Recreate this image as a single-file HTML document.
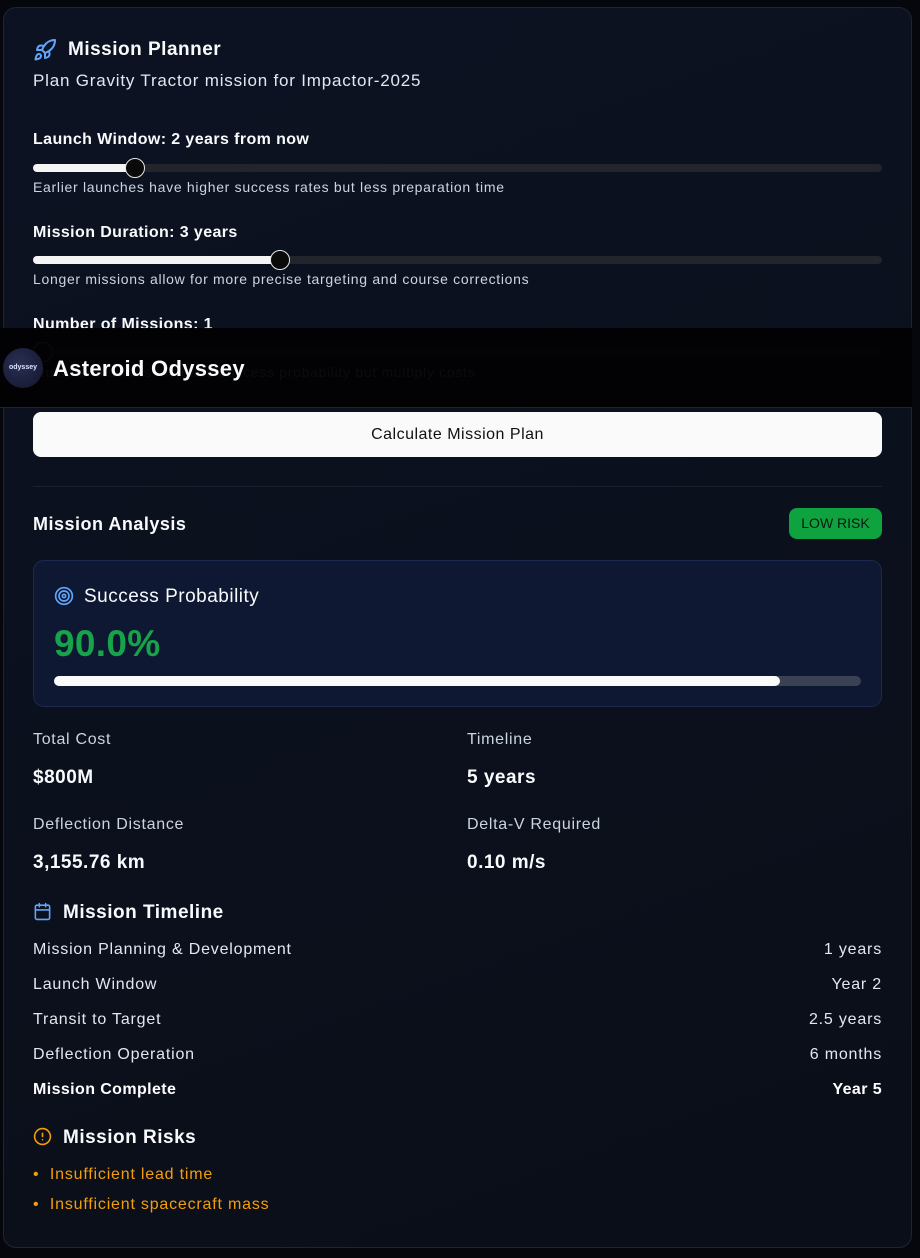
<!DOCTYPE html>
<html><head><style>
*{box-sizing:border-box;margin:0;padding:0}
body{width:920px;height:1258px;background:#05070c;font-family:"Liberation Sans",sans-serif;color:#f8fafc;position:relative;overflow:hidden;letter-spacing:0.5px}
.card{position:absolute;left:3px;top:7px;width:909px;height:1241px;border:1px solid #1e2433;border-radius:13px;background:linear-gradient(160deg,#0c1222,#0b101c 60%,#0a0e18)}
.a{position:absolute;left:33px}
.h{font-weight:bold;font-size:19px}
.lab{font-weight:bold;font-size:16px;letter-spacing:0.4px}
.hint{font-size:14px;color:#cbd5e1;letter-spacing:0.7px}
.track{position:absolute;left:33px;width:849px;height:8px;border-radius:4px;background:#22252b}
.fill{position:absolute;left:0;top:0;height:8px;border-radius:4px;background:#f5f5f5}
.thumb{position:absolute;top:-6px;width:20px;height:20px;border-radius:50%;background:#0a0a0a;border:1.5px solid #e5e5e5}
.k{font-size:16px;color:#cbd5e1;letter-spacing:0.7px}
.v{font-size:19px;font-weight:bold}
.row{position:absolute;left:33px;width:849px;font-size:16px;color:#e2e8f0;display:flex;justify-content:space-between;letter-spacing:0.8px}
</style></head><body>
<div class="card"></div>
<svg class="a" style="top:38px" width="24" height="24" viewBox="0 0 24 24" fill="none" stroke="#60a5fa" stroke-width="2" stroke-linecap="round" stroke-linejoin="round"><path d="M4.5 16.5c-1.5 1.26-2 5-2 5s3.74-.5 5-2c.71-.84.7-2.13-.09-2.91a2.18 2.18 0 0 0-2.91-.09z"/><path d="m12 15-3-3a22 22 0 0 1 2-3.950A12.88 12.88 0 0 1 22 2c0 2.72-.78 7.5-6 11a22.35 22.35 0 0 1-4 2z"/><path d="M9 12H4s.55-3.03 2-4c1.62-1.08 5 0 5 0"/><path d="M12 15v5s3.030-.55 4-2c1.08-1.62 0-5 0-5"/></svg>
<div class="a h" style="left:68px;top:39px">Mission Planner</div>
<div class="a" style="top:71px;font-size:17px;color:#e2e8f0;letter-spacing:0.8px">Plan Gravity Tractor mission for Impactor-2025</div>
<div class="a lab" style="top:131px">Launch Window: 2 years from now</div>
<div class="track" style="top:164px"><div class="fill" style="width:102px"></div><div class="thumb" style="left:92px"></div></div>
<div class="a hint" style="top:179px">Earlier launches have higher success rates but less preparation time</div>
<div class="a lab" style="top:224px">Mission Duration: 3 years</div>
<div class="track" style="top:256px"><div class="fill" style="width:247px"></div><div class="thumb" style="left:237px"></div></div>
<div class="a hint" style="top:271px">Longer missions allow for more precise targeting and course corrections</div>
<div class="a lab" style="top:316px">Number of Missions: 1</div>
<div class="track" style="top:348px"><div class="thumb" style="left:0"></div></div>
<div class="a hint" style="top:364px">Multiple missions increase success probability but multiply costs</div>
<div style="position:absolute;left:0;top:328px;width:912px;height:80px;background:rgba(2,2,4,0.96);border-bottom:1px solid #1f2430"></div>
<div style="position:absolute;left:3px;top:348px;width:40px;height:40px;border-radius:50%;background:radial-gradient(circle at 40% 40%,#2a2f55,#12152a);color:#dfe3ff;font-size:7px;font-weight:bold;text-align:center;line-height:40px;letter-spacing:0">odyssey</div>
<div style="position:absolute;left:53px;top:356px;font-size:22px;font-weight:bold;letter-spacing:0.3px">Asteroid Odyssey</div>
<div style="position:absolute;left:33px;top:412px;width:849px;height:45px;border-radius:8px;background:#fafafa;color:#111;font-size:16px;text-align:center;line-height:45px">Calculate Mission Plan</div>
<div style="position:absolute;left:33px;top:486px;width:849px;height:1px;background:#1a2030"></div>
<div class="a" style="top:514px;font-size:18px;font-weight:bold">Mission Analysis</div>
<div style="position:absolute;left:789px;top:508px;width:93px;height:31px;border-radius:8px;background:#0ea33e;color:#0a1a10;font-size:14px;text-align:center;line-height:31px;letter-spacing:0">LOW RISK</div>
<div style="position:absolute;left:33px;top:560px;width:849px;height:147px;border-radius:11px;background:#0f1833;border:1px solid #1c2a4d"></div>
<svg style="position:absolute;left:54px;top:586px" width="20" height="20" viewBox="0 0 24 24" fill="none" stroke="#60a5fa" stroke-width="2"><circle cx="12" cy="12" r="10"/><circle cx="12" cy="12" r="6"/><circle cx="12" cy="12" r="2"/></svg>
<div style="position:absolute;left:84px;top:586px;font-size:19px">Success Probability</div>
<div style="position:absolute;left:54px;top:623px;font-size:37px;font-weight:bold;color:#16a34a;letter-spacing:0.3px">90.0%</div>
<div style="position:absolute;left:54px;top:676px;width:807px;height:10px;border-radius:5px;background:#3a4152"><div style="width:726px;height:10px;border-radius:5px;background:#fafafa"></div></div>
<div class="a k" style="top:731px">Total Cost</div>
<div class="a v" style="top:767px">$800M</div>
<div class="a k" style="left:467px;top:731px">Timeline</div>
<div class="a v" style="left:467px;top:767px">5 years</div>
<div class="a k" style="top:816px">Deflection Distance</div>
<div class="a v" style="top:852px">3,155.76 km</div>
<div class="a k" style="left:467px;top:816px">Delta-V Required</div>
<div class="a v" style="left:467px;top:852px">0.10 m/s</div>
<svg style="position:absolute;left:33px;top:902px" width="19" height="19" viewBox="0 0 24 24" fill="none" stroke="#60a5fa" stroke-width="2" stroke-linecap="round"><rect x="3" y="4" width="18" height="18" rx="2"/><path d="M16 2v4M8 2v4M3 10h18"/></svg>
<div class="a" style="left:63px;top:902px;font-size:19px;font-weight:bold">Mission Timeline</div>
<div class="row" style="top:941px"><span>Mission Planning &amp; Development</span><span>1 years</span></div>
<div class="row" style="top:976px"><span>Launch Window</span><span>Year 2</span></div>
<div class="row" style="top:1011px"><span>Transit to Target</span><span>2.5 years</span></div>
<div class="row" style="top:1046px"><span>Deflection Operation</span><span>6 months</span></div>
<div class="row" style="top:1081px;font-weight:bold;color:#fff;letter-spacing:0.4px"><span>Mission Complete</span><span>Year 5</span></div>
<svg style="position:absolute;left:33px;top:1127px" width="19" height="19" viewBox="0 0 24 24" fill="none" stroke="#f59e0b" stroke-width="2" stroke-linecap="round"><circle cx="12" cy="12" r="10"/><path d="M12 8v4M12 16h.01"/></svg>
<div class="a" style="left:63px;top:1127px;font-size:19px;font-weight:bold">Mission Risks</div>
<div class="a" style="top:1166px;font-size:16px;color:#f59e0b;letter-spacing:0.8px">•&nbsp; Insufficient lead time</div>
<div class="a" style="top:1196px;font-size:16px;color:#f59e0b;letter-spacing:0.8px">•&nbsp; Insufficient spacecraft mass</div>
</body></html>
